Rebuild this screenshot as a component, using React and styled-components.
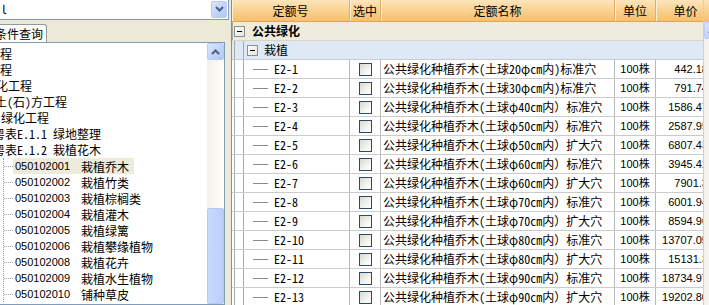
import React from "react";
import styled, { createGlobalStyle } from "styled-components";

const CJK = `"Noto Sans Mono CJK SC", "Noto Sans CJK SC", monospace`;
const NUM = `"Liberation Sans", "Noto Sans CJK SC", sans-serif`;

const GlobalStyle = createGlobalStyle`
  html, body {
    margin: 0;
    padding: 0;
    overflow: hidden;
    background: #ffffff;
  }
  body {
    font-family: ${CJK};
    font-size: 12px;
    color: #000;
  }
`;

const topRows = [
  { text: "程", offset: 1 },
  { text: "程", offset: 1 },
  { text: "化工程", offset: -3 },
  { text: "土(石)方工程", offset: -4 },
  { text: "绿化工程", offset: 2 },
  { text: "粤表E.1.1 绿地整理", offset: -6 },
  { text: "粤表E.1.2 栽植花木", offset: -6 },
];

const leaves = [
  ["050102001", "栽植乔木"],
  ["050102002", "栽植竹类"],
  ["050102003", "栽植棕榈类"],
  ["050102004", "栽植灌木"],
  ["050102005", "栽植绿篱"],
  ["050102006", "栽植攀缘植物"],
  ["050102008", "栽植花卉"],
  ["050102009", "栽植水生植物"],
  ["050102010", "铺种草皮"],
];

const items = [
  ["E2-1", "(土球20φcm内)标准穴", "442.18"],
  ["E2-2", "(土球30φcm内)标准穴", "791.74"],
  ["E2-3", "(土球φ40cm内）标准穴", "1586.47"],
  ["E2-4", "(土球φ50cm内）标准穴", "2587.95"],
  ["E2-5", "(土球φ50cm内）扩大穴", "6807.43"],
  ["E2-6", "(土球φ60cm内）标准穴", "3945.42"],
  ["E2-7", "(土球φ60cm内）扩大穴", "7901.3"],
  ["E2-8", "(土球φ70cm内）标准穴", "6001.94"],
  ["E2-9", "(土球φ70cm内）扩大穴", "8594.90"],
  ["E2-10", "(土球φ80cm内）标准穴", "13707.05"],
  ["E2-11", "(土球φ80cm内）扩大穴", "15131.3"],
  ["E2-12", "(土球φ90cm内）标准穴", "18734.97"],
  ["E2-13", "(土球φ90cm内）扩大穴", "19202.80"],
];

const columns = [
  { title: "定额号", w: 118 },
  { title: "选中", w: 31 },
  { title: "定额名称", w: 234 },
  { title: "单位", w: 41 },
  { title: "单价", w: 60 },
];

const Chevron = ({ up }) => (
  <svg width="9" height="6" viewBox="0 0 9 6">
    <polyline
      points={up ? "1,5 4.5,1.5 8,5" : "1,1 4.5,4.5 8,1"}
      fill="none"
      stroke="#4d6185"
      strokeWidth="2"
    />
  </svg>
);

const App = () => {
  return (
    <>
      <GlobalStyle />
      <Screen>
        <LeftPanel>
          <Combo>
            <ComboText>l</ComboText>
            <ArrowButton>
              <Chevron />
            </ArrowButton>
          </Combo>
          <TabStrip>
            <Tab>条件查询</Tab>
          </TabStrip>
          <TreeBox>
            <TreeList>
              {topRows.map((r, i) => (
                <TopRow key={i} $offset={r.offset}>
                  {r.text}
                </TopRow>
              ))}
              <LeafGroup>
                {leaves.map(([code, name], i) => (
                  <LeafRow key={code}>
                    <Connector />
                    <LeafLabel $selected={i === 0}>
                      <LeafCode>{code}</LeafCode>
                      {name}
                    </LeafLabel>
                  </LeafRow>
                ))}
              </LeafGroup>
            </TreeList>
            <ScrollBar>
              <ArrowButton $scroll>
                <Chevron up />
              </ArrowButton>
              <ScrollTrack $h={148} />
              <ScrollThumb />
            </ScrollBar>
          </TreeBox>
        </LeftPanel>

        <RightPanel>
          <GridViewport>
            <GridTable>
              <HeaderRow>
                {columns.map((c) => (
                  <HeaderCell key={c.title} $w={c.w}>
                    {c.title}
                  </HeaderCell>
                ))}
              </HeaderRow>
              <GroupRow>
                <Guide $w={2} />
                <ExpandBox />
                <GroupTitle>公共绿化</GroupTitle>
              </GroupRow>
              <SubGroupRow>
                <Guide $w={2} $none />
                <Guide $w={9} />
                <Guide $w={4} />
                <ExpandBox />
                <SubTitle>栽植</SubTitle>
              </SubGroupRow>
              {items.map(([code, spec, price]) => (
                <DataRow key={code}>
                  <CodeCell>
                    <Guide $w={2} $none />
                    <Guide $w={9} />
                    <Guide $w={10} />
                    <Branch />
                    <CodeText>{code}</CodeText>
                  </CodeCell>
                  <CheckCell>
                    <CheckBox />
                  </CheckCell>
                  <NameCell>公共绿化种植乔木{spec}</NameCell>
                  <UnitCell>100株</UnitCell>
                  <PriceCell>{price}</PriceCell>
                </DataRow>
              ))}
            </GridTable>
          </GridViewport>
          <GridScroll>
            <ScrollCorner />
            <ArrowButton $scroll>
              <Chevron up />
            </ArrowButton>
            <ScrollTrack $h={40} />
          </GridScroll>
        </RightPanel>
      </Screen>
    </>
  );
};

export default App;

const Screen = styled.div`
  display: flex;
  width: 721px;
  height: 305px;
  overflow: hidden;
`;

const LeftPanel = styled.div`
  width: 231px;
  flex-shrink: 0;
  display: flex;
  flex-direction: column;
  background: #ece9d8;
`;

const Combo = styled.div`
  height: 22px;
  margin: -2px 2px 0 -4px;
  box-sizing: border-box;
  display: flex;
  align-items: center;
  border: 1px solid #7f9db9;
  background: #fff;
`;

const ComboText = styled.div`
  flex: 1;
  padding-left: 4px;
  line-height: 18px;
`;

const ArrowButton = styled.div`
  width: ${(p) => (p.$scroll ? "17px" : "16px")};
  height: ${(p) => (p.$scroll ? "17px" : "17px")};
  margin: ${(p) => (p.$scroll ? "0" : "1px")};
  box-sizing: border-box;
  flex-shrink: 0;
  display: flex;
  align-items: center;
  justify-content: center;
  border: 1px solid #bccbf3;
  border-radius: 2px;
  background: linear-gradient(135deg, #dce6fd 0%, #c4d4fb 50%, #b3c7f5 100%);
`;

const TabStrip = styled.div`
  margin-top: 4px;
  height: 18px;
  display: flex;
`;

const Tab = styled.div`
  margin-left: -6px;
  padding: 0 3px 0 0;
  border: 1px solid #919b9c;
  border-bottom: none;
  border-radius: 0 3px 0 0;
  background: #fcfcfa;
  line-height: 17px;
  white-space: nowrap;
`;

const TreeBox = styled.div`
  flex: 1;
  width: 227px;
  margin-left: -2px;
  box-sizing: border-box;
  display: flex;
  border: 1px solid #7f9db9;
  background: #fff;
  overflow: hidden;
`;

const TreeList = styled.div`
  flex: 1;
  overflow: hidden;
  padding-top: 3px;
  display: flex;
  flex-direction: column;
`;

const TopRow = styled.div`
  height: 16px;
  line-height: 16px;
  white-space: nowrap;
  margin-left: ${(p) => p.$offset}px;
`;

const LeafGroup = styled.div`
  margin-left: 4px;
  border-left: 1px dotted #a0a0a0;
  display: flex;
  flex-direction: column;
`;

const LeafRow = styled.div`
  height: 16px;
  display: flex;
  align-items: center;
  white-space: nowrap;
`;

const Connector = styled.div`
  width: 9px;
  border-top: 1px dotted #a0a0a0;
`;

const LeafLabel = styled.div`
  display: flex;
  align-items: center;
  height: 16px;
  padding: 0 5px 0 2px;
  background: ${(p) => (p.$selected ? "#edebdc" : "transparent")};
`;

const LeafCode = styled.span`
  width: 66px;
  font-family: ${NUM};
  font-size: 11px;
`;

const ScrollBar = styled.div`
  width: 17px;
  flex-shrink: 0;
  display: flex;
  flex-direction: column;
  background: linear-gradient(to right, #f3f1ea, #fdfdfa);
`;

const ScrollTrack = styled.div`
  height: ${(p) => p.$h}px;
  flex-shrink: 0;
`;

const ScrollThumb = styled.div`
  flex: 1;
  border: 1px solid #b4c8f4;
  border-radius: 2px;
  background: linear-gradient(to right, #c9d8fc, #bccffa);
`;

const RightPanel = styled.div`
  display: flex;
  flex-shrink: 0;
  border-left: 1px solid #8c8c8c;
  background: #fff;
`;

const GridViewport = styled.div`
  width: 471px;
  overflow: hidden;
`;

const GridTable = styled.div`
  width: 484px;
  display: flex;
  flex-direction: column;
`;

const HeaderRow = styled.div`
  height: 22px;
  display: flex;
  box-sizing: border-box;
  border-bottom: 1px solid #e2a656;
  background: linear-gradient(#fde5bb, #f9cf8c 55%, #f6bf70);
`;

const HeaderCell = styled.div`
  width: ${(p) => p.$w}px;
  flex-shrink: 0;
  box-sizing: border-box;
  border-right: 1px solid #dcae6c;
  box-shadow: inset 1px 0 #fff1d6;
  text-align: center;
  line-height: 21px;
`;

const RowBase = styled.div`
  height: 19px;
  display: flex;
  align-items: stretch;
  box-sizing: border-box;
  border-bottom: 1px solid #cbcbcb;
`;

const GroupRow = styled(RowBase)`
  background: #efecdd;
  border-bottom-color: #d9d6c6;
`;

const SubGroupRow = styled(RowBase)`
  background: #dfe8f5;
  border-bottom-color: #c6ccd6;
`;

const DataRow = styled(RowBase)`
  background: #fff;
`;

const Guide = styled.div`
  width: ${(p) => p.$w}px;
  flex-shrink: 0;
  box-sizing: border-box;
  border-left: ${(p) => (p.$none ? "none" : "1px solid #a9a9a9")};
`;

const ExpandBox = styled.div`
  width: 11px;
  height: 11px;
  align-self: center;
  flex-shrink: 0;
  box-sizing: border-box;
  display: flex;
  align-items: center;
  justify-content: center;
  border: 1px solid #8e8e8e;
  background: linear-gradient(135deg, #ffffff, #e4e4e0);
  &::after {
    content: "";
    width: 5px;
    height: 1px;
    background: #000;
  }
`;

const GroupTitle = styled.div`
  margin-left: 7px;
  font-weight: bold;
  line-height: 18px;
`;

const SubTitle = styled.div`
  margin-left: 6px;
  line-height: 18px;
`;

const CodeCell = styled.div`
  width: 118px;
  flex-shrink: 0;
  display: flex;
  box-sizing: border-box;
  border-right: 1px solid #b9b9b9;
`;

const Branch = styled.div`
  width: 15px;
  height: 1px;
  align-self: center;
  background: #8a8a8a;
`;

const CodeText = styled.div`
  margin-left: 6px;
  line-height: 18px;
`;

const CheckCell = styled.div`
  width: 31px;
  flex-shrink: 0;
  display: flex;
  align-items: center;
  justify-content: center;
  box-sizing: border-box;
  border-right: 1px solid #b9b9b9;
`;

const CheckBox = styled.div`
  width: 13px;
  height: 13px;
  box-sizing: border-box;
  border: 1px solid #2a4a6a;
  background: linear-gradient(135deg, #d9d9d3, #f7f7f5 70%, #ffffff);
`;

const NameCell = styled.div`
  width: 234px;
  flex-shrink: 0;
  box-sizing: border-box;
  padding-left: 2px;
  border-right: 1px solid #b9b9b9;
  line-height: 18px;
  white-space: nowrap;
  overflow: hidden;
`;

const UnitCell = styled.div`
  width: 41px;
  flex-shrink: 0;
  box-sizing: border-box;
  border-right: 1px solid #b9b9b9;
  text-align: center;
  line-height: 18px;
  font-family: ${NUM};
  font-size: 11px;
`;

const PriceCell = styled.div`
  width: 60px;
  flex-shrink: 0;
  box-sizing: border-box;
  padding-right: 8px;
  text-align: right;
  line-height: 18px;
  font-family: ${NUM};
  font-size: 11px;
`;

const GridScroll = styled.div`
  width: 18px;
  flex-shrink: 0;
  display: flex;
  flex-direction: column;
  box-sizing: border-box;
  border-left: 1px solid #d0d0d0;
  background: linear-gradient(to right, #f3f1ea, #fdfdfa);
`;

const ScrollCorner = styled.div`
  height: 22px;
  flex-shrink: 0;
  background: linear-gradient(#fde5bb, #f9cf8c 55%, #f6bf70);
`;
